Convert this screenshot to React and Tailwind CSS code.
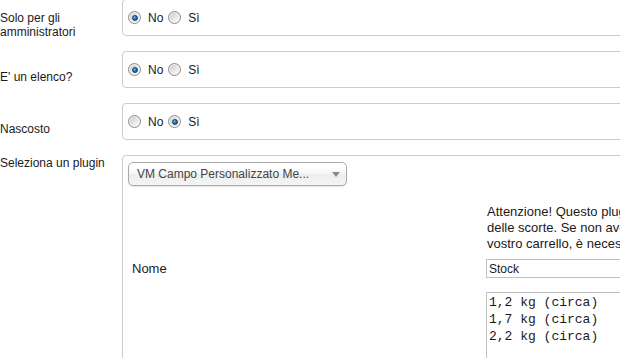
import React from "react";

const Radio = ({ checked }) => (
  <span className="relative inline-flex h-[13px] w-[13px] shrink-0 items-center justify-center rounded-full border border-[#8a8a8a] bg-[linear-gradient(135deg,#c6c6c6,#eeeeee_65%,#ffffff)] shadow-[inset_0_0_0_1px_#f4f4f4]">
    {checked && (
      <span className="h-[6px] w-[6px] rounded-full border border-[#0e3f6e] bg-[radial-gradient(circle_at_35%_35%,#6fb6ef,#1b68b0_60%,#0d4a85)]" />
    )}
  </span>
);

const YesNo = ({ value }) => (
  <div className="flex items-center pl-[5px]">
    <Radio checked={value === "no"} />
    <span className="ml-[7px] mr-[5px]">No</span>
    <Radio checked={value === "si"} />
    <span className="ml-[7px]">Sì</span>
  </div>
);

const Row = ({ label, value }) => (
  <div className="flex h-[52px]">
    <div className="flex w-[122px] shrink-0 items-center leading-[14px]">{label}</div>
    <div className="flex h-[37px] w-[520px] shrink-0 items-center rounded-[4px] border border-[#cccccc] bg-white">
      <YesNo value={value} />
    </div>
  </div>
);

export default function App() {
  return (
    <div className="h-[358px] w-[620px] overflow-hidden bg-white font-['Liberation_Sans',Arial,sans-serif] text-[12px] text-[#1a1a1a]">
      <div className="-mt-px">
        <Row
          label={
            <span>
              Solo per gli
              <br />
              amministratori
            </span>
          }
          value="no"
        />
        <Row label="E' un elenco?" value="no" />
        <Row label="Nascosto" value="si" />

        <div className="flex">
          <div className="w-[122px] shrink-0 pt-px leading-[14px]">Seleziona un plugin</div>
          <div className="h-[260px] w-[520px] shrink-0 rounded-[4px] border border-[#cccccc] bg-white pl-[5px] pt-[6px]">
            <div className="flex h-[24px] w-[219px] items-center justify-between rounded-[5px] border border-[#aaaaaa] bg-[linear-gradient(#ffffff_20%,#f6f6f6_50%,#eeeeee_52%,#f4f4f4)] pl-[8px] pr-[6px] text-[#444444] shadow-[0_1px_1px_rgba(0,0,0,0.1)]">
              <span>VM Campo Personalizzato Me...</span>
              <svg width="8" height="5" viewBox="0 0 8 5">
                <path d="M0 0H8L4 5Z" fill="#8a8a8a" />
              </svg>
            </div>

            <div className="ml-[4px] mt-[18px] grid grid-cols-[354px_1fr] text-[13px]">
              <div />
              <div className="whitespace-nowrap pl-px leading-[16px]">
                Attenzione! Questo plugin richiede l'attivazione della gestione
                <br />
                delle scorte. Se non avete attivato la gestione delle scorte nel
                <br />
                vostro carrello, è necessario farlo prima di utilizzarlo.
              </div>

              <div className="mt-[7px] flex items-center">Nome</div>
              <div className="mt-[7px] flex h-[19px] w-[200px] items-center border border-[#c0c0c0] pl-[2px] text-[12px]">
                Stock
              </div>

              <div />
              <div className="mt-[13px] h-[100px] w-[200px] border border-[#c0c0c0] px-[2px] py-px font-['Liberation_Mono','Courier_New',monospace] text-[13px] leading-[17px]">
                1,2 kg (circa)
                <br />
                1,7 kg (circa)
                <br />
                2,2 kg (circa)
              </div>
            </div>
          </div>
        </div>
      </div>
    </div>
  );
}
